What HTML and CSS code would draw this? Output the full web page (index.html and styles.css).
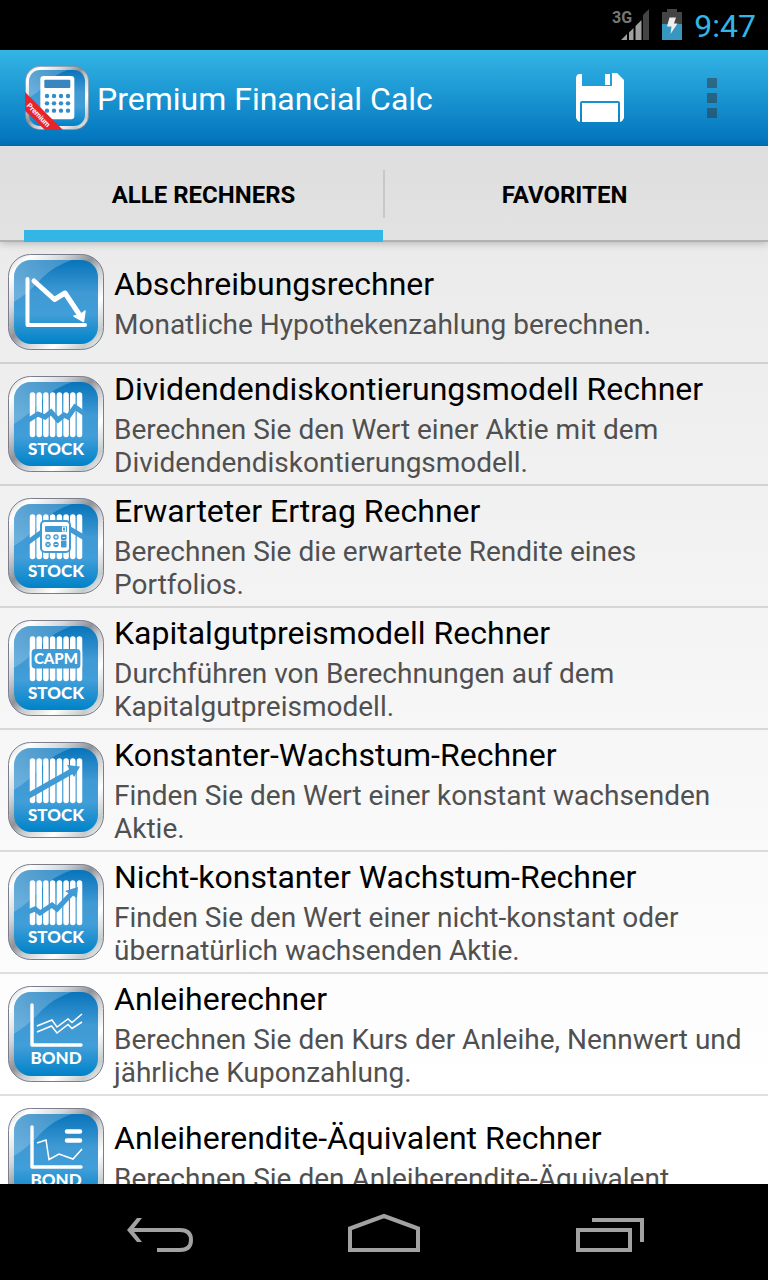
FILE: index.html
```html
<!DOCTYPE html>
<html lang="de">
<head>
    <meta charset="UTF-8">
    <meta name="viewport" content="width=device-width, initial-scale=1.0">
    <title>Premium Financial Calc</title>
    <link rel="stylesheet" href="styles.css">
</head>
<body>
    <!-- Shared icon parts -->
    <svg class="icon-defs" aria-hidden="true">
        <defs>
            <linearGradient id="metal" x1="0" y1="0" x2="1" y2="1">
                <stop offset="0" stop-color="#c4c8ca"/>
                <stop offset="0.12" stop-color="#ffffff"/>
                <stop offset="0.3" stop-color="#d5d8da"/>
                <stop offset="0.46" stop-color="#8d9298"/>
                <stop offset="0.55" stop-color="#c9cccf"/>
                <stop offset="0.72" stop-color="#ffffff"/>
                <stop offset="0.88" stop-color="#c5cccd"/>
                <stop offset="1" stop-color="#ffffff"/>
            </linearGradient>
            <linearGradient id="blue" x1="0" y1="0" x2="0" y2="1">
                <stop offset="0" stop-color="#0874bb"/>
                <stop offset="0.4" stop-color="#409ad4"/>
                <stop offset="0.65" stop-color="#409ed8"/>
                <stop offset="1" stop-color="#0082c8"/>
            </linearGradient>
            <linearGradient id="gloss" x1="0" y1="0" x2="1" y2="1">
                <stop offset="0" stop-color="#ffffff" stop-opacity="0.35"/>
                <stop offset="1" stop-color="#ffffff" stop-opacity="0.05"/>
            </linearGradient>
        </defs>
        <symbol id="frame" viewBox="0 0 96 96">
            <rect x="0.5" y="0.5" width="95" height="95" rx="22" fill="url(#metal)" stroke="#7b7d8d"/>
            <rect x="6" y="6" width="84" height="84" rx="17" fill="url(#blue)"/>
            <path d="M6 48V23A17 17 0 0 1 23 6H64Q46 12 34 24Q22 38 6 48Z" fill="url(#gloss)"/>
        </symbol>
        <symbol id="bars" viewBox="0 0 96 96">
            <path d="M24.500 19V58.500M31.200 19V58.500M37.900 19V58.500M44.600 19V58.500M51.400 19V58.500M58.100 19V58.500M64.800 19V58.500M71.500 19V58.500" fill="none" stroke="#fff" stroke-width="5.500" stroke-linecap="round"/>
        </symbol>
        <symbol id="axes" viewBox="0 0 96 96">
            <path d="M24 19V59H73" fill="none" stroke="#fff" stroke-width="3.400" stroke-linecap="round" stroke-linejoin="round"/>
        </symbol>
    </svg>

    <div class="screen">
        <div class="status-bar">
            <svg width="38" height="34" viewBox="0 0 38 34" aria-hidden="true">
                <text x="0" y="15" class="network">3G</text>
                <path d="M9 32L15 26V32Z M17 24.500L21.500 20V32H17Z M23.500 18L29.500 12V32H23.500Z" fill="#a0a0a0"/>
                <path d="M31 7L37 1V32H31Z" fill="#444"/>
            </svg>
            <svg width="20" height="34" viewBox="0 0 20 34" aria-hidden="true">
                <path d="M0 4H5V1H15V4H20V16H0Z" fill="#444"/>
                <path d="M0 16H20V32H0Z" fill="#3797bf"/>
                <path d="M7.500 9.500H14L12 15.500H15.500L8.500 26L9.500 18.500H5Z" fill="#eee"/>
            </svg>
            <span class="clock">9:47</span>
        </div>

        <header class="action-bar">
            <svg class="app-icon" viewBox="0 0 96 96" aria-hidden="true">
                <use href="#frame"/>
                <rect x="23" y="15" width="51" height="65" rx="5" fill="#fff"/>
                <rect x="29" y="20.500" width="39" height="12.500" rx="1.500" fill="#3885c0"/>
                <g fill="#2f8ecb">
                    <circle cx="33" cy="45" r="3.300"/><circle cx="43.500" cy="45" r="3.300"/><circle cx="54" cy="45" r="3.300"/><circle cx="64.500" cy="45" r="3.300"/>
                    <circle cx="33" cy="56" r="3.300"/><circle cx="43.500" cy="56" r="3.300"/><circle cx="54" cy="56" r="3.300"/><circle cx="64.500" cy="56" r="3.300"/>
                    <circle cx="33" cy="67" r="3.300"/><circle cx="43.500" cy="67" r="3.300"/><circle cx="54" cy="67" r="3.300"/><circle cx="64.500" cy="67" r="3.300"/>
                </g>
                <path d="M0 39L57 96H30L0 67Z" fill="#e5252b"/>
                <text x="2" y="60" transform="rotate(46 2 60)" class="ribbon">Premium</text>
            </svg>
            <h1>Premium Financial Calc</h1>
            <button class="action-button" aria-label="Speichern">
                <svg width="48" height="50" viewBox="0 0 48 50" aria-hidden="true">
                    <path d="M3 1H6V13H36V0H41L48 7V45Q47 48 44 49V30Q44 28 42 28H6Q4 28 4 30V49Q1 48 0 45V4Q1 1 3 1Z" fill="#fff"/>
                    <path d="M29 1H34V12H29Z" fill="#fff"/>
                    <path d="M6 30H42V49H6Z" fill="#fff"/>
                </svg>
            </button>
            <button class="action-button" aria-label="Weitere Optionen">
                <svg width="10" height="40" viewBox="0 0 10 40" aria-hidden="true">
                    <path d="M0 0H10V10H0ZM0 15H10V25H0ZM0 30H10V40H0Z" fill="#333" opacity="0.5"/>
                </svg>
            </button>
        </header>

        <nav class="tabs">
            <button class="tab active">ALLE RECHNERS</button>
            <button class="tab">FAVORITEN</button>
        </nav>

        <main class="list">
            <div class="row">
                <svg class="row-icon" viewBox="0 0 96 96" aria-hidden="true">
                    <use href="#frame"/>
                    <g fill="none" stroke="#fff" stroke-linecap="round" stroke-linejoin="round">
                        <path d="M19.500 25V71H77" stroke-width="4"/>
                        <path d="M26 27L46.500 45.500L57 39L73 63" stroke-width="5"/>
                    </g>
                    <path d="M66 62L72 61L77 57L75.500 67.500Z" fill="#fff" stroke="#fff" stroke-width="1.500" stroke-linejoin="round"/>
                </svg>
                <div class="row-text">
                    <h2>Abschreibungsrechner</h2>
                    <p>Monatliche Hypothekenzahlung berechnen.</p>
                </div>
            </div>

            <div class="row">
                <svg class="row-icon" viewBox="0 0 96 96" aria-hidden="true">
                    <use href="#frame"/>
                    <use href="#bars"/>
                    <path d="M19 45L30 38L37 41L43 36L50 44L56 39L60 41L67 31L77 38" fill="none" stroke="#409ad4" stroke-width="5"/>
                    <text x="48" y="79" class="icon-label">STOCK</text>
                </svg>
                <div class="row-text">
                    <h2>Dividendendiskontierungsmodell Rechner</h2>
                    <p>Berechnen Sie den Wert einer Aktie mit dem Dividendendiskontierungsmodell.</p>
                </div>
            </div>

            <div class="row">
                <svg class="row-icon" viewBox="0 0 96 96" aria-hidden="true">
                    <use href="#frame"/>
                    <use href="#bars"/>
                    <path d="M19 45L34 34M60 30L77 40" fill="none" stroke="#409ad4" stroke-width="5"/>
                    <rect x="33" y="23" width="29" height="31" rx="4" fill="#fff" stroke="#409ad4" stroke-width="2"/>
                    <rect x="37" y="28" width="22" height="6" rx="1" fill="#409ad4"/>
                    <rect x="54.500" y="29" width="3" height="4" fill="none" stroke="#fff"/>
                    <g fill="#409ad4">
                        <circle cx="40" cy="39" r="2.700"/><circle cx="48" cy="39" r="2.700"/>
                        <circle cx="40" cy="46.500" r="2.700"/><circle cx="48" cy="46.500" r="2.700"/>
                        <rect x="53" y="36.500" width="5.500" height="5.500" rx="1"/><rect x="53" y="42.500" width="5.500" height="7" rx="1"/>
                    </g>
                    <path d="M38.500 39H41.500M40 37.500V40.500M46.500 39H49.500M48 37.500V40.500M39 45.500L41 47.500M41 45.500L39 47.500M46.500 46.500H49.500M54.500 39.500H57" fill="none" stroke="#fff"/>
                    <text x="48" y="79" class="icon-label">STOCK</text>
                </svg>
                <div class="row-text">
                    <h2>Erwarteter Ertrag Rechner</h2>
                    <p>Berechnen Sie die erwartete Rendite eines Portfolios.</p>
                </div>
            </div>

            <div class="row">
                <svg class="row-icon" viewBox="0 0 96 96" aria-hidden="true">
                    <use href="#frame"/>
                    <use href="#bars"/>
                    <rect x="23.500" y="29" width="49" height="19.500" rx="4" fill="#409ad4"/>
                    <path d="M22.500 31V47M73.500 31V47" stroke="#fff" stroke-width="1.500"/>
                    <text x="48" y="44" class="icon-label capm">CAPM</text>
                    <text x="48" y="79" class="icon-label">STOCK</text>
                </svg>
                <div class="row-text">
                    <h2>Kapitalgutpreismodell Rechner</h2>
                    <p>Durchführen von Berechnungen auf dem Kapitalgutpreismodell.</p>
                </div>
            </div>

            <div class="row">
                <svg class="row-icon" viewBox="0 0 96 96" aria-hidden="true">
                    <use href="#frame"/>
                    <use href="#bars"/>
                    <path d="M20 54L66 28" fill="none" stroke="#409ad4" stroke-width="6"/>
                    <path d="M59 23L72 24.500L66 35Z" fill="#409ad4"/>
                    <text x="48" y="79" class="icon-label">STOCK</text>
                </svg>
                <div class="row-text">
                    <h2>Konstanter-Wachstum-Rechner</h2>
                    <p>Finden Sie den Wert einer konstant wachsenden Aktie.</p>
                </div>
            </div>

            <div class="row">
                <svg class="row-icon" viewBox="0 0 96 96" aria-hidden="true">
                    <use href="#frame"/>
                    <use href="#bars"/>
                    <path d="M20 48L27 45L32 49L44 41L49 45L65 28" fill="none" stroke="#409ad4" stroke-width="5"/>
                    <path d="M57 27L70 23L69 34Z" fill="#409ad4"/>
                    <text x="48" y="79" class="icon-label">STOCK</text>
                </svg>
                <div class="row-text">
                    <h2>Nicht-konstanter Wachstum-Rechner</h2>
                    <p>Finden Sie den Wert einer nicht-konstant oder übernatürlich wachsenden Aktie.</p>
                </div>
            </div>

            <div class="row">
                <svg class="row-icon" viewBox="0 0 96 96" aria-hidden="true">
                    <use href="#frame"/>
                    <use href="#axes"/>
                    <path d="M29 40L44 34L49 41L60 33L64 36.500L74 28M29 46L43.500 40L49 47L60 38.500L64 42.500L74 36" fill="none" stroke="#fff" stroke-width="1.500"/>
                    <text x="48" y="78" class="icon-label">BOND</text>
                </svg>
                <div class="row-text">
                    <h2>Anleiherechner</h2>
                    <p>Berechnen Sie den Kurs der Anleihe, Nennwert und jährliche Kuponzahlung.</p>
                </div>
            </div>

            <div class="row">
                <svg class="row-icon" viewBox="0 0 96 96" aria-hidden="true">
                    <use href="#frame"/>
                    <use href="#axes"/>
                    <path d="M29 35L38 32L41 51.500L51 46L65 51L74 41" fill="none" stroke="#fff" stroke-width="1.500"/>
                    <path d="M59 23.500H72M59 32.500H72" stroke="#fff" stroke-width="4.500" stroke-linecap="round"/>
                    <text x="48" y="78" class="icon-label">BOND</text>
                </svg>
                <div class="row-text">
                    <h2>Anleiherendite-Äquivalent Rechner</h2>
                    <p>Berechnen Sie den Anleiherendite-Äquivalent</p>
                </div>
            </div>
        </main>

        <div class="nav-bar">
            <button aria-label="Zurück">
                <svg width="72" height="48" viewBox="0 0 72 48" aria-hidden="true">
                    <path d="M6 22H56Q67 22 67 32T56 42H33" fill="none" stroke="#a2a2a2" stroke-width="4"/>
                    <path d="M13 10H18L8.500 22L18 34H13L3 22Z" fill="#a2a2a2"/>
                </svg>
            </button>
            <button aria-label="Startseite">
                <svg width="72" height="48" viewBox="0 0 72 48" aria-hidden="true">
                    <path d="M2 42V20.500L36 8L70 20.500V42Z" fill="none" stroke="#a2a2a2" stroke-width="4"/>
                </svg>
            </button>
            <button aria-label="Letzte Apps">
                <svg width="72" height="48" viewBox="0 0 72 48" aria-hidden="true">
                    <path d="M6 22H58V42H6ZM20 12H70V34" fill="none" stroke="#a2a2a2" stroke-width="4"/>
                </svg>
            </button>
        </div>
    </div>
</body>
</html>
```
FILE: styles.css
```css
:root {
    --holo-blue: #33b5e5;
    --bar-blue: #0072bc;
    --text-color: #000000;
    --text-secondary: #505050;
}

* {
    box-sizing: border-box;
}

body {
    font-family: Roboto, "Noto Sans", sans-serif;
    margin: 0;
    background-color: #000;
    color: var(--text-color);
}

h1, h2, p {
    margin: 0;
    font-weight: 400;
}

button {
    font-family: inherit;
    border: none;
    padding: 0;
    background: none;
    cursor: pointer;
}

.icon-defs {
    position: absolute;
    width: 0;
    height: 0;
}

.screen {
    display: flex;
    flex-direction: column;
    height: 100vh;
    overflow: hidden;
}

/* Status bar */
.status-bar {
    flex: none;
    display: flex;
    align-items: center;
    justify-content: flex-end;
    gap: 12px;
    height: 50px;
    padding-right: 12px;
    background-color: #000;
}

.network {
    font-size: 16px;
    font-weight: 700;
    fill: #777;
}

.clock {
    padding-top: 2px;
    font-size: 32px;
    line-height: 40px;
    color: var(--holo-blue);
}

/* Action bar */
.action-bar {
    flex: none;
    display: flex;
    align-items: center;
    height: 96px;
    padding-left: 25px;
    background: linear-gradient(var(--holo-blue), var(--bar-blue));
}

.app-icon {
    width: 64px;
    height: 64px;
    margin-right: 8px;
}

.ribbon {
    font-size: 11px;
    font-weight: 700;
    fill: #fff;
}

.action-bar h1 {
    flex: 1;
    padding-top: 2px;
    font-size: 32px;
    line-height: 40px;
    color: #fff;
}

.action-button {
    display: flex;
    align-items: center;
    justify-content: center;
    width: 112px;
    height: 96px;
}

/* Tabs */
.tabs {
    flex: none;
    display: flex;
    height: 96px;
    padding: 0 24px;
    background: linear-gradient(#dedede, #e2e2e2);
    box-shadow: inset 0 -2px 0 #b2b2b2, 0 1px 8px rgba(0, 0, 0, 0.25);
    position: relative;
}

.tab {
    flex: 1;
    position: relative;
    padding-top: 2px;
    font-size: 24px;
    font-weight: 700;
    color: var(--text-color);
    border-top: 12px solid transparent;
    border-bottom: 12px solid transparent;
}

.tab.active {
    border-bottom-color: var(--holo-blue);
}

.tab + .tab {
    padding-left: 2px;
}

.tab + .tab::before {
    content: "";
    position: absolute;
    left: 0;
    top: 12px;
    bottom: 12px;
    width: 2px;
    background-color: #c8c8c8;
}

/* Calculator list */
.list {
    flex: 1;
    min-height: 0;
    overflow: hidden;
    background: linear-gradient(#ebebeb, #ffffff 90%);
}

.row {
    display: flex;
    align-items: center;
    min-height: 122px;
    padding: 0 8px;
    border-bottom: 2px solid rgba(0, 0, 0, 0.12);
}

.row-icon {
    flex: none;
    width: 96px;
    height: 96px;
    margin-right: 10px;
}

.row-text {
    flex: 1;
    min-width: 0;
}

.row h2 {
    margin-bottom: 3px;
    font-size: 32px;
    line-height: 41px;
}

.row p {
    font-size: 28px;
    line-height: 33px;
    color: var(--text-secondary);
}

.icon-label {
    font-family: Lato, sans-serif;
    font-size: 17px;
    font-weight: 900;
    text-anchor: middle;
    fill: #fff;
}

.capm {
    font-size: 15px;
}

/* Navigation bar */
.nav-bar {
    flex: none;
    display: flex;
    height: 96px;
    padding: 0 48px;
    background-color: #000;
}

.nav-bar button {
    flex: 1;
    display: flex;
    align-items: center;
    justify-content: center;
}
```
